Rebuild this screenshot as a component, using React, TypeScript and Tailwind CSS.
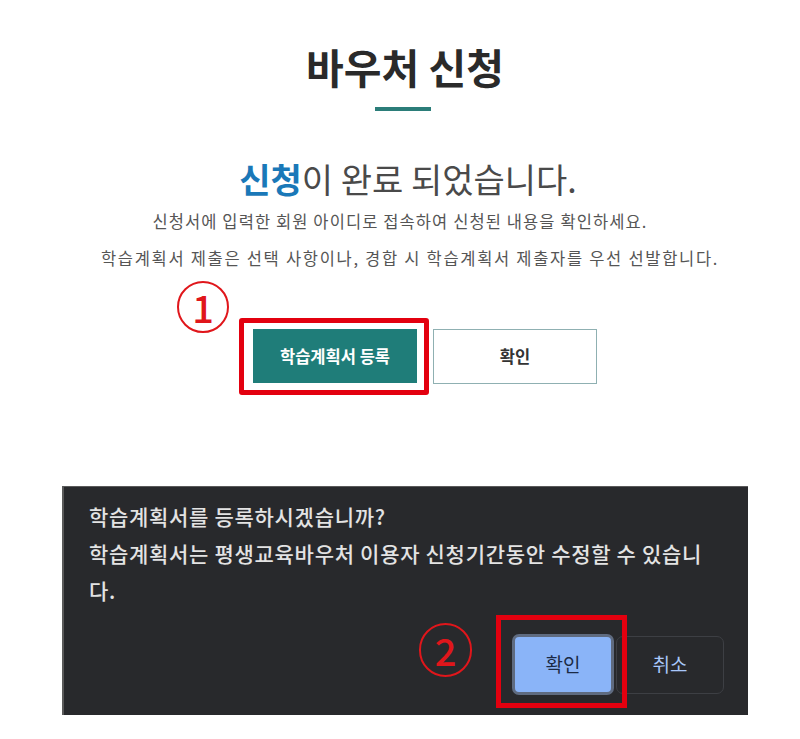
import React from "react";

const kr = { fontFamily: '"Noto Sans CJK KR", "Noto Sans", sans-serif' };

function CircledNumber({ n, className }: { n: string; className: string }) {
  return (
    <span
      className={`absolute flex items-center justify-center rounded-full border-[2.5px] border-[#e0161b] text-[#e0161b] ${className}`}
      style={kr}
    >
      {n}
    </span>
  );
}

export default function App() {
  return (
    <div className="w-[800px] h-[739px] bg-white overflow-hidden" style={kr}>
      {/* result page */}
      <div className="flex flex-col items-center pt-[38px]">
        <h1 className="text-[41px] font-bold leading-[56px] text-[#2a2a2a] pl-[10px]">
          바우처 신청
        </h1>
        <div className="mt-[13px] h-[4px] w-[56px] bg-[#2b7d79] ml-[6px]" />

        <p className="mt-[45px] text-[34px] leading-[46px] text-[#4a4a4a] ml-[16px]">
          <span className="font-bold text-[#1a78b8]">신청</span>이 완료 되었습니다.
        </p>
        <p className="mt-[8px] text-[16.5px] leading-[22px] text-[#555] tracking-[1.1px]">
          신청서에 입력한 회원 아이디로 접속하여 신청된 내용을 확인하세요.
        </p>
        <p className="mt-[15px] text-[16.5px] leading-[22px] text-[#555] tracking-[1.7px] ml-[20px]">
          학습계획서 제출은 선택 사항이나, 경합 시 학습계획서 제출자를 우선 선발합니다.
        </p>

        <div className="relative mt-[60px] flex gap-[16px] ml-[50px]">
          <CircledNumber n="1" className="-left-[76px] -top-[48px] w-[52px] h-[52px] text-[38px] font-medium leading-none" />
          <div className="relative">
            <button className="h-[54px] w-[164px] bg-[#1f7d79] text-white text-[16.5px] font-bold">
              학습계획서 등록
            </button>
            <span className="absolute -left-[14px] -top-[11px] -right-[12px] -bottom-[11px] rounded-[3px] border-[5px] border-[#e3000f]" />
          </div>
          <button className="h-[55px] w-[164px] bg-white border border-[#8fb0b2] text-[#333] text-[16.5px] font-bold">
            확인
          </button>
        </div>
      </div>

      {/* confirm dialog */}
      <div className="mt-[102px] ml-[62px] w-[686px] h-[229px] bg-[#28292c] border-l-2 border-t border-[#5a5a5a] pl-[25px] pr-[24px] pt-[11px] flex flex-col">
        <p className="text-[21px] font-medium leading-[37px] text-[#e3e3e3] tracking-[0.7px]">
          학습계획서를 등록하시겠습니까?
          <br />
          학습계획서는 평생교육바우처 이용자 신청기간동안 수정할 수 있습니
          <br />
          다.
        </p>
        <div className="mt-auto mb-[20px] flex justify-end items-center">
          <div className="relative mr-[2px]">
            <CircledNumber n="2" className="-left-[93px] -top-[11px] w-[53px] h-[54px] text-[38px] font-medium leading-none" />
            <button className="h-[61px] w-[102px] rounded-[7px] bg-[#8ab4f8] border-[3px] border-[#5f6b80] text-[#1b2a45] text-[19px]">
              확인
            </button>
            <span className="absolute -left-[16px] -top-[19px] -right-[13px] -bottom-[13px] border-[5px] border-[#e3000f]" />
          </div>
          <button className="h-[58px] w-[108px] rounded-[7px] border border-[#3d3f44] text-[#a8c7fa] text-[19px]">
            취소
          </button>
        </div>
      </div>
    </div>
  );
}
